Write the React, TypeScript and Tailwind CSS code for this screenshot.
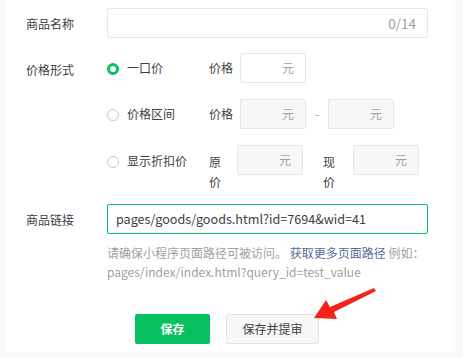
import React from "react";

const font = { fontFamily: '"Noto Sans CJK SC", "Noto Sans", sans-serif' };

function Radio({ checked }: { checked?: boolean }) {
  return checked ? (
    <span className="mt-[1px] h-[12px] w-[12px] shrink-0 rounded-full border-[3px] border-[#07c160] bg-white" />
  ) : (
    <span className="mt-[1px] h-[12px] w-[12px] shrink-0 rounded-full border border-[#c9c9c9] bg-white" />
  );
}

function YuanBox({ disabled, className = "" }: { disabled?: boolean; className?: string }) {
  return (
    <div
      className={
        "flex h-[30px] w-[66px] items-center justify-end rounded-[2px] border border-[#e7e7e7] pr-[11px] text-[12px] text-[#a0a0a0] " +
        (disabled ? "bg-[#f6f7f9] " : "bg-white ") +
        className
      }
    >
      元
    </div>
  );
}

export default function App() {
  return (
    <div className="min-h-screen bg-[#fafafa] pl-[6px] pr-[11px] text-[12px] text-[#3e3e3e]" style={font}>
      <div className="relative h-[352px] bg-white pl-[20px] pt-[8px]">
        {/* 商品名称 */}
        <div className="flex items-center">
          <div className="w-[81px] pt-[1px]">商品名称</div>
          <div className="flex h-[30px] w-[321px] items-center justify-end rounded-[2px] border border-[#e7e7e7] pr-[11px] text-[13.5px] text-[#a0a0a0]">
            0/14
          </div>
        </div>

        {/* 价格形式 */}
        <div className="mt-[15px] flex">
          <div className="w-[81px] pt-[8px]">价格形式</div>
          <div className="flex flex-col gap-[16px]">
            <div className="flex items-center">
              <div className="flex w-[102px] items-center gap-[8px] self-start pt-[6px]">
                <Radio checked />
                <span className="leading-[18px]">一口价</span>
              </div>
              <span className="w-[31px]">价格</span>
              <YuanBox />
            </div>
            <div className="flex items-center">
              <div className="flex w-[102px] items-center gap-[8px] self-start pt-[6px]">
                <Radio />
                <span className="leading-[18px]">价格区间</span>
              </div>
              <span className="w-[31px]">价格</span>
              <YuanBox disabled />
              <span className="w-[22px] text-center text-[#a0a0a0]">-</span>
              <YuanBox disabled />
            </div>
            <div className="flex items-start">
              <div className="flex w-[102px] items-center gap-[8px] pt-[7px]">
                <Radio />
                <span className="leading-[18px]">显示折扣价</span>
              </div>
              <span className="w-[28px] pt-[7px] leading-[20px]">
                原<br />价
              </span>
              <YuanBox disabled />
              <span className="ml-[20px] w-[30px] pt-[7px] leading-[20px]">
                现<br />价
              </span>
              <YuanBox disabled />
            </div>
          </div>
        </div>

        {/* 商品链接 */}
        <div className="mt-[12px] flex items-center">
          <div className="w-[81px] pt-[1px]">商品链接</div>
          <div className="flex h-[30px] w-[321px] items-center rounded-[2px] border border-[#07c160] pl-[8px] text-[12.6px]">
            pages/goods/goods.html?id=7694&amp;wid=41
          </div>
        </div>
        <div className="ml-[81px] mt-[9px] text-[12px] leading-[19px] text-[#a0a0a0]">
          <div>
            请确保小程序页面路径可被访问。 <span className="text-[#576b95]">获取更多页面路径</span> 例如：
          </div>
          <div>pages/index/index.html?query_id=test_value</div>
        </div>

        {/* buttons */}
        <div className="mt-[33px] flex gap-[16px] pl-[109px]">
          <button className="h-[30px] w-[75px] rounded-[2px] bg-[#07c160] text-[12px] font-bold text-white">
            保存
          </button>
          <button className="h-[30px] w-[93px] rounded-[2px] border border-[#e4e4e4] bg-[#f7f7f7] text-[12px] text-[#3e3e3e]">
            保存并提审
          </button>
        </div>

        <svg className="absolute left-[300px] top-[282px]" width="75" height="45" viewBox="0 0 75 45">
          <polygon points="68,6 70,9 28,30 31,37 8,36 20,18 24,25" fill="#f5211b" />
        </svg>
      </div>
    </div>
  );
}
